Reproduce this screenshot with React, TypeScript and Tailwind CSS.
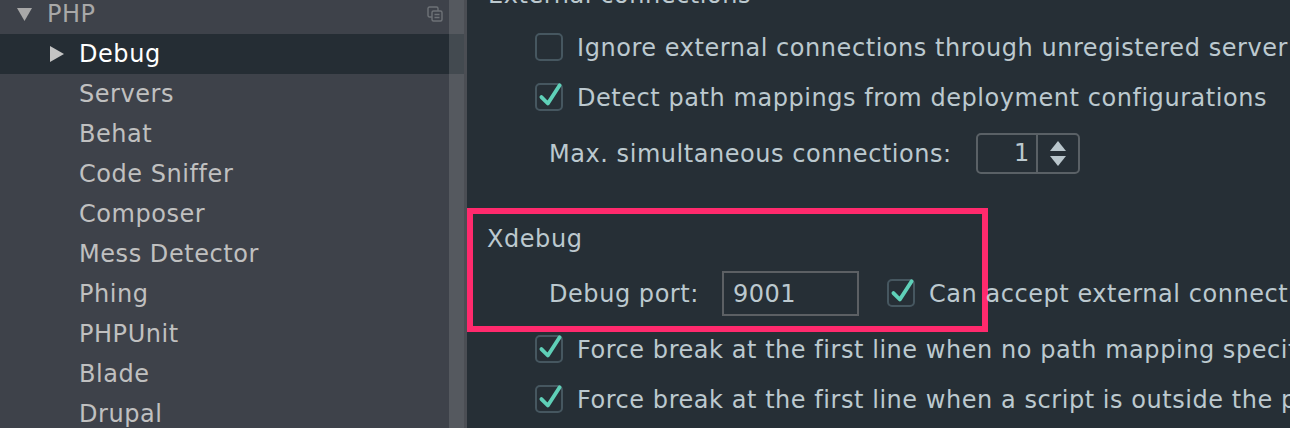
import { ReactNode } from 'react'

const font = { fontFamily: '"DejaVu Sans", "Liberation Sans", sans-serif' }

const children = [
  'Servers',
  'Behat',
  'Code Sniffer',
  'Composer',
  'Mess Detector',
  'Phing',
  'PHPUnit',
  'Blade',
  'Drupal',
]

function Check({ checked }: { checked: boolean }) {
  return (
    <div className="relative w-[28px] h-[28px] rounded-[5px] border-2 border-[#465760] shrink-0">
      {checked && (
        <svg viewBox="0 0 28 28" className="absolute -left-[2px] -top-[4px] w-[30px] h-[30px]">
          <path d="M6 15 L12 21 L23 4" fill="none" stroke="#5fd0b8" strokeWidth="3.6" strokeLinecap="round" strokeLinejoin="round" />
        </svg>
      )}
    </div>
  )
}

function CheckRow({ checked, children, className }: { checked: boolean; children: ReactNode; className: string }) {
  return (
    <div className={`flex items-center gap-[14px] pl-[68px] whitespace-nowrap ${className}`}>
      <Check checked={checked} />
      <span className="pt-[2px]">{children}</span>
    </div>
  )
}

function Sidebar() {
  return (
    <div className="relative w-[467px] h-full bg-[#3e424a] shrink-0 overflow-hidden">
      <div className="-mt-[6px] text-[24px] tracking-[0.55px] text-[#c0c0c0]">
        <div className="flex items-center h-[40px] pl-[17px] text-[#a8a8a8]">
          <svg viewBox="0 0 15 13" className="w-[15px] h-[13px] mr-[15px]">
            <path d="M0 0 H15 L7.5 13 Z" fill="#a8a8a8" />
          </svg>
          <span>PHP</span>
          <svg viewBox="0 0 16 16" className="ml-auto mr-[24px] w-[16px] h-[16px]">
            <rect x="1" y="1" width="10" height="10" rx="1.5" fill="none" stroke="#6e7277" strokeWidth="1.4" />
            <rect x="5" y="5" width="10" height="10" rx="1.5" fill="#3e424a" stroke="#6e7277" strokeWidth="1.4" />
            <path d="M7.5 8.5 H12.5 M7.5 11.5 H12.5" stroke="#6e7277" strokeWidth="1.4" />
          </svg>
        </div>
        <div className="flex items-center h-[40px] pl-[50px] bg-[#252d34] text-white">
          <svg viewBox="0 0 14 16" className="w-[14px] h-[16px] mr-[15px]">
            <path d="M0 0 L14 8 L0 16 Z" fill="#c4c4c4" />
          </svg>
          <span>Debug</span>
        </div>
        {children.map((c) => (
          <div key={c} className="flex items-center h-[40px] pl-[79px]">
            {c}
          </div>
        ))}
      </div>
      {/* scrollbar */}
      <div className="absolute top-0 bottom-0 left-[449px] w-[15px] bg-[#8a8e93]/30" />
      <div className="absolute top-0 bottom-0 left-[464px] w-[3px] bg-[#4b4e54]" />
    </div>
  )
}

function Spinner() {
  return (
    <div className="flex w-[104px] h-[41px] rounded-[5px] border-2 border-[#5a6166] shrink-0">
      <div className="flex-1 flex items-center justify-end pr-[6px] border-r-2 border-[#5a6166]">1</div>
      <div className="w-[40px] flex flex-col items-center justify-center gap-[5px]">
        <svg viewBox="0 0 16 10" className="w-[16px] h-[10px]">
          <path d="M8 0 L16 10 L0 10 Z" fill="#b9c6cc" />
        </svg>
        <svg viewBox="0 0 16 10" className="w-[16px] h-[10px]">
          <path d="M0 0 L16 0 L8 10 Z" fill="#b9c6cc" />
        </svg>
      </div>
    </div>
  )
}

function Settings() {
  return (
    <div className="flex-1 h-full bg-[#262f36] text-[24px] tracking-[0.55px] text-[#bcc9cf] overflow-hidden">
      <div className="-mt-[25px] h-[40px] flex items-center pl-[21px] whitespace-nowrap">External connections</div>
      <CheckRow checked={false} className="mt-[7px] h-[50px]">Ignore external connections through unregistered server</CheckRow>
      <CheckRow checked={true} className="h-[50px]">Detect path mappings from deployment configurations</CheckRow>
      <div className="mt-[9px] h-[44px] flex items-center pl-[82px] whitespace-nowrap">
        <span className="pt-[2px]">Max. simultaneous connections:</span>
        <div className="ml-[24px] shrink-0">
          <Spinner />
        </div>
      </div>
      <div className="mt-[33px] w-[521px] h-[124px] border-[6px] border-[#ff2a6d]">
        <div className="h-[40px] mt-[4px] flex items-center pl-[14px] pt-[2px]">Xdebug</div>
        <div className="mt-[12px] h-[46px] flex items-center pl-[76px] whitespace-nowrap">
          <span className="shrink-0 pt-[2px]">Debug port:</span>
          <div className="ml-[23px] w-[137px] h-[45px] border-2 border-[#5c6064] flex items-center pl-[9px] pt-[2px] shrink-0">9001</div>
          <div className="ml-[28px] flex items-center gap-[14px] shrink-0">
            <Check checked={true} />
            <span className="pt-[2px]">Can accept external connections</span>
          </div>
        </div>
      </div>
      <CheckRow checked={true} className="h-[34px]">Force break at the first line when no path mapping specified</CheckRow>
      <CheckRow checked={true} className="mt-[16px] h-[34px]">Force break at the first line when a script is outside the project</CheckRow>
    </div>
  )
}

export default function App() {
  return (
    <div className="flex w-[1290px] h-[428px] overflow-hidden" style={font}>
      <Sidebar />
      <Settings />
    </div>
  )
}
